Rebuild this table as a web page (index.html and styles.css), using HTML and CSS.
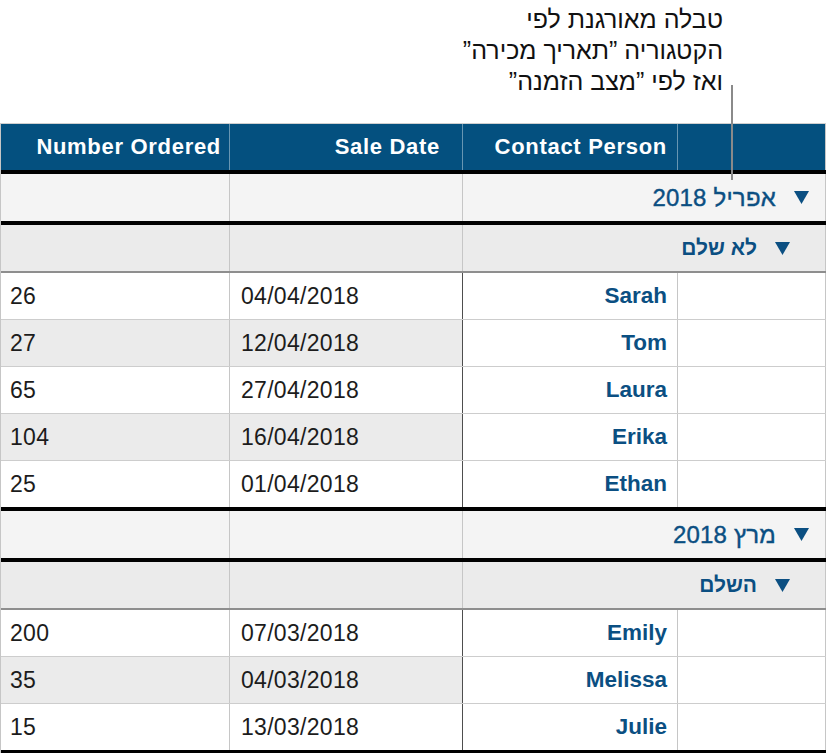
FILE: index.html
```html
<!DOCTYPE html>
<html lang="he">
<head>
<meta charset="utf-8">
<link rel="stylesheet" href="styles.css">
</head>
<body>
<div class="page">
  <div class="callout" dir="rtl">
    <p>טבלה מאורגנת לפי<br>הקטגוריה ”תאריך מכירה”<br>ואז לפי ”מצב הזמנה”</p>
  </div>
  <div class="leader"></div>
  <div class="table">
    <div class="row head">
      <div class="cell c1">Number Ordered</div>
      <div class="cell c2">Sale Date</div>
      <div class="cell c3">Contact Person</div>
      <div class="cell c4"></div>
    </div>

    <div class="row group">
      <div class="cell c1"></div>
      <div class="cell c2"></div>
      <div class="cell wide" dir="rtl"><svg class="tri" viewBox="0 0 15 13"><polygon points="0,0 15,0 7.5,13"/></svg><span>אפריל 2018</span></div>
    </div>
    <div class="row sub">
      <div class="cell c1"></div>
      <div class="cell c2"></div>
      <div class="cell wide" dir="rtl"><svg class="tri" viewBox="0 0 15 13"><polygon points="0,0 15,0 7.5,13"/></svg><span>לא שלם</span></div>
    </div>
    <div class="row data">
      <div class="cell c1">26</div><div class="cell c2">04/04/2018</div><div class="cell c3">Sarah</div><div class="cell c4"></div>
    </div>
    <div class="row data alt">
      <div class="cell c1">27</div><div class="cell c2">12/04/2018</div><div class="cell c3">Tom</div><div class="cell c4"></div>
    </div>
    <div class="row data">
      <div class="cell c1">65</div><div class="cell c2">27/04/2018</div><div class="cell c3">Laura</div><div class="cell c4"></div>
    </div>
    <div class="row data alt">
      <div class="cell c1">104</div><div class="cell c2">16/04/2018</div><div class="cell c3">Erika</div><div class="cell c4"></div>
    </div>
    <div class="row data last">
      <div class="cell c1">25</div><div class="cell c2">01/04/2018</div><div class="cell c3">Ethan</div><div class="cell c4"></div>
    </div>

    <div class="row group">
      <div class="cell c1"></div>
      <div class="cell c2"></div>
      <div class="cell wide" dir="rtl"><svg class="tri" viewBox="0 0 15 13"><polygon points="0,0 15,0 7.5,13"/></svg><span>מרץ 2018</span></div>
    </div>
    <div class="row sub">
      <div class="cell c1"></div>
      <div class="cell c2"></div>
      <div class="cell wide" dir="rtl"><svg class="tri" viewBox="0 0 15 13"><polygon points="0,0 15,0 7.5,13"/></svg><span>השלם</span></div>
    </div>
    <div class="row data">
      <div class="cell c1">200</div><div class="cell c2">07/03/2018</div><div class="cell c3">Emily</div><div class="cell c4"></div>
    </div>
    <div class="row data alt">
      <div class="cell c1">35</div><div class="cell c2">04/03/2018</div><div class="cell c3">Melissa</div><div class="cell c4"></div>
    </div>
    <div class="row data last end">
      <div class="cell c1">15</div><div class="cell c2">13/03/2018</div><div class="cell c3">Julie</div><div class="cell c4"></div>
    </div>
  </div>
</div>
</body>
</html>
```

FILE: styles.css
```css
html, body {
  margin: 0;
  padding: 0;
  background: #ffffff;
}
body {
  font-family: "Liberation Sans", Arial, "Noto Sans", sans-serif;
  color: #1c1c1c;
}
.page {
  position: relative;
  width: 828px;
  height: 753px;
  overflow: hidden;
}
.callout {
  height: 123px;
  box-sizing: border-box;
  padding: 4px 105px 0 0;
}
.callout p {
  margin: 0;
  font-size: 25px;
  line-height: 31px;
  color: #111;
  text-align: right;
}
.leader {
  position: absolute;
  left: 731px;
  top: 85px;
  width: 2px;
  height: 95px;
  background: #8a8a8a;
  z-index: 2;
}
.table {
  width: 826px;
  box-sizing: border-box;
  border-left: 1px solid #c6c6c6;
  border-top: 1px solid #cfcfcf;
}
.row {
  display: flex;
  box-sizing: border-box;
}
.cell {
  box-sizing: border-box;
  border-right: 1px solid #c6c6c6;
  display: flex;
  align-items: center;
  font-size: 22px;
}
.c1 { width: 229px; }
.c2 { width: 233px; }
.c3 { width: 215px; }
.c4 { width: 148px; }
.wide { width: 363px; }

/* header */
.head {
  height: 46px;
  background: #04507f;
}
.head .cell {
  color: #ffffff;
  font-weight: bold;
  letter-spacing: 0.7px;
  justify-content: flex-end;
  border-right-color: rgba(255, 255, 255, 0.4);
}
.head .c1 { padding-right: 8px; }
.head .c2 { padding-right: 22px; }
.head .c3 { padding-right: 10px; }
.head .c4 { border-right-color: #c6c6c6; }

/* group rows */
.group, .sub {
  border-top: 4px solid #000;
  color: #0b4f82;
}
.group { height: 51px; background: #f4f4f4; }
.sub {
  height: 52px;
  background: #ebebeb;
  border-bottom: 2px solid #8e8e8e;
}
.wide {
  justify-content: flex-start;
  padding-right: 16px;
}
.sub .wide { padding-right: 35px; }
.wide span {
  margin-right: 18px;
  font-size: 24px;
  letter-spacing: 0.2px;
  -webkit-text-stroke: 0.4px #0b4f82;
}
.sub .wide span {
  font-weight: bold;
  font-size: 21px;
  letter-spacing: 0;
  -webkit-text-stroke: 0;
}
.tri {
  width: 15px;
  height: 13px;
  fill: #0b4f82;
  flex: none;
}

/* data rows */
.data {
  height: 47px;
  border-bottom: 1px solid #cdcdcd;
  background: #ffffff;
}
.data.last { height: 46px; border-bottom: none; }
.data.end { border-bottom: 4px solid #000; height: 50px; }
.data .c1 { padding-left: 9px; }
.data .c2 {
  padding-left: 11px;
  border-right: 1px solid #4e4e4e;
}
.data .c1, .data .c2 {
  font-size: 23px;
  letter-spacing: 0.3px;
}
.data.alt .c1, .data.alt .c2 { background: #ebebeb; }
.data .c3 {
  justify-content: flex-end;
  padding-right: 10px;
  font-weight: bold;
  font-size: 22.5px;
  color: #0b4f82;
}
```
